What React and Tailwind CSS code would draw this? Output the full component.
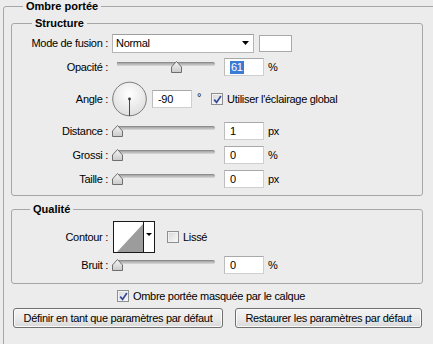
import React from "react";

const Field = ({ value, selected }) => (
  <div className="w-[40px] h-[18px] shrink-0 bg-white border border-[#cfcfcf] border-t-[#a9a9a9] border-l-[#bdbdbd] flex items-center pl-[5px]">
    {selected ? (
      <span className="bg-[#3a7bd5] text-white px-px leading-[13px]">{value}</span>
    ) : (
      <span>{value}</span>
    )}
  </div>
);

const Slider = ({ value }) => (
  <div className="relative w-[104px] h-[12px] shrink-0">
    <div className="absolute left-[5px] right-[1px] top-[1px] h-[4px] rounded-r-[2px] border-t border-[#8c8c8c] bg-linear-to-b from-[#a4a4a4] to-[#d9d9d9]" />
    <svg
      className="absolute top-0"
      style={{ left: 5 + value * 0.98 - 5.5 }}
      width="11"
      height="12"
      viewBox="0 0 11 12"
    >
      <defs>
        <linearGradient id="thumb" x1="0" y1="0" x2="0" y2="1">
          <stop offset="0" stopColor="#f6f6f6" />
          <stop offset="1" stopColor="#c9c9c9" />
        </linearGradient>
      </defs>
      <polygon points="0.5,11.5 0.5,6 5.5,0.5 10.5,6 10.5,11.5" fill="url(#thumb)" stroke="#6e6e6e" />
    </svg>
  </div>
);

const Check = ({ checked }) => (
  <span className="w-[12px] h-[12px] shrink-0 border border-[#8e8f8f] bg-linear-to-br from-[#d6d6d6] to-[#fbfbfb] shadow-[inset_0_0_0_1px_#f2f2f2] flex items-center justify-center">
    {checked && (
      <svg width="9" height="9" viewBox="0 0 9 9">
        <path d="M1.2 4.6 L3.6 7.4 L7.9 1" stroke="#34489a" strokeWidth="1.7" fill="none" />
      </svg>
    )}
  </span>
);

const Row = ({ label, h = "h-[18px]", children }) => (
  <div className={`flex items-center ${h}`}>
    <span className="w-[96px] shrink-0 text-right whitespace-nowrap">{label}</span>
    {children}
  </div>
);

const SliderRow = ({ label, value, unit, selected }) => (
  <Row label={label} h="h-[20px]">
    <div className="ml-[4px] flex items-center">
      <Slider value={value} />
    </div>
    <div className="ml-[8px]">
      <Field value={value} selected={selected} />
    </div>
    <span className="ml-[4px]">{unit}</span>
  </Row>
);

const Dial = () => (
  <svg width="35" height="36" viewBox="0 0 35 36" className="shrink-0">
    <defs>
      <radialGradient id="dial" cx="0.5" cy="0.35" r="0.7">
        <stop offset="0" stopColor="#ffffff" />
        <stop offset="1" stopColor="#dcdcdc" />
      </radialGradient>
    </defs>
    <circle cx="17.5" cy="18" r="16.8" fill="url(#dial)" stroke="#7b7b7b" />
    <line x1="17.5" y1="18" x2="17.5" y2="35" stroke="#4a4a4a" strokeWidth="1" />
    <circle cx="17.5" cy="18" r="1.4" fill="#3a3a3a" />
  </svg>
);

const Contour = () => (
  <svg width="42" height="32" viewBox="0 0 42 32" className="shrink-0">
    <rect x="0.5" y="0.5" width="41" height="31" fill="#fff" stroke="#1a1a1a" />
    <polygon points="4,31 30,3 30,31" fill="#9c9c9c" />
    <line x1="30.5" y1="0" x2="30.5" y2="32" stroke="#1a1a1a" />
    <polygon points="33,12 39,12 36,15" fill="#000" />
  </svg>
);

const btn =
  "h-[20px] rounded-[3px] border border-[#707070] bg-linear-to-b from-[#f4f4f4] via-[#ebebeb] to-[#d8d8d8] shadow-[inset_0_0_0_1px_#fbfbfb] text-[11px] tracking-[-0.3px] text-black";

export default function App() {
  return (
    <div className="w-[433px] h-[344px] overflow-hidden bg-[#ececec] pl-[3px] text-[11px] leading-[13px] tracking-[-0.3px] text-black font-['Liberation_Sans',Arial,sans-serif]">
      <fieldset className="w-[445px] h-[380px] border border-[#a7a7a7] rounded-[3px] min-w-0">
        <legend className="ml-[19px] px-[3px] font-bold tracking-normal">Ombre portée</legend>

        <fieldset className="ml-[7px] mt-[4px] w-[412px] border border-[#a7a7a7] rounded-[3px] min-w-0">
          <legend className="ml-[20px] px-[3px] font-bold tracking-normal">Structure</legend>
          <div className="flex flex-col gap-[4px] pt-[3px] pb-[6px]">
            <Row label="Mode de fusion :" h="h-[20px]">
              <div className="ml-[4px] w-[142px] h-[19px] bg-white border border-[#b5b5b5] border-t-[#9d9d9d] flex items-center pl-[3px] pr-[4px]">
                <span className="flex-1">Normal</span>
                <svg width="7" height="4" viewBox="0 0 7 4">
                  <polygon points="0,0 7,0 3.5,4" fill="#000" />
                </svg>
              </div>
              <div className="ml-[5px] w-[33px] h-[17px] bg-white border border-[#a9a9a9]" />
            </Row>

            <SliderRow label="Opacité :" value={61} unit="%" selected />

            <Row label="Angle :" h="h-[36px]">
              <div className="ml-[4px]">
                <Dial />
              </div>
              <div className="ml-[5px]">
                <Field value="-90" />
              </div>
              <span className="ml-[5px] -mt-[3px]">°</span>
              <div className="ml-[10px] flex items-center gap-[4px]">
                <Check checked />
                <span>Utiliser l'éclairage global</span>
              </div>
            </Row>

            <SliderRow label="Distance :" value={1} unit="px" />
            <SliderRow label="Grossi :" value={0} unit="%" />
            <SliderRow label="Taille :" value={0} unit="px" />
          </div>
        </fieldset>

        <fieldset className="ml-[7px] mt-[7px] w-[412px] border border-[#a7a7a7] rounded-[3px] min-w-0">
          <legend className="ml-[18px] px-[3px] font-bold tracking-normal">Qualité</legend>
          <div className="flex flex-col gap-[2px] pt-[5px] pb-[8px]">
            <Row label="Contour :" h="h-[32px]">
              <div className="ml-[5px]">
                <Contour />
              </div>
              <div className="ml-[12px] flex items-center gap-[4px]">
                <Check />
                <span>Lissé</span>
              </div>
            </Row>
            <SliderRow label="Bruit :" value={0} unit="%" />
          </div>
        </fieldset>

        <div className="mt-[5px] h-[14px] pl-[113px] flex items-center gap-[4px]">
          <Check checked />
          <span>Ombre portée masquée par le calque</span>
        </div>

        <div className="mt-[5px] pl-[9px] flex gap-[12px]">
          <button className={`${btn} w-[210px]`}>Définir en tant que paramètres par défaut</button>
          <button className={`${btn} w-[187px]`}>Restaurer les paramètres par défaut</button>
        </div>
      </fieldset>
    </div>
  );
}
